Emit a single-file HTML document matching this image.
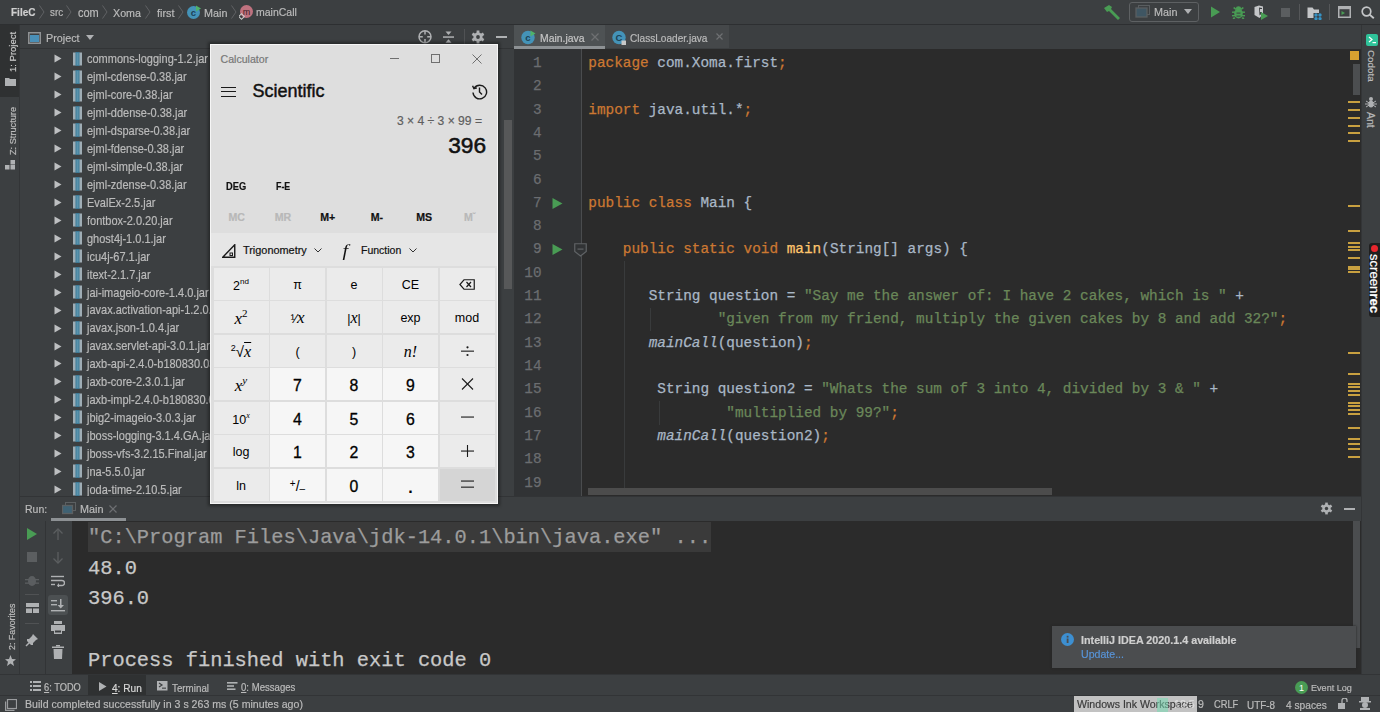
<!DOCTYPE html>
<html><head><meta charset="utf-8">
<style>
*{margin:0;padding:0;box-sizing:border-box}
html,body{width:1380px;height:712px;overflow:hidden;background:#3c3f41;font-family:"Liberation Sans",sans-serif;color:#bbbbbb}
.a{position:absolute}
.ui{white-space:nowrap;-webkit-text-stroke:0.2px currentColor}
.mono{font-family:"Liberation Mono",monospace;white-space:pre;-webkit-text-stroke:0.25px currentColor}
.k{color:#cc7832}.s{color:#6a8759}.f{color:#ffc66d}.i{font-style:italic}
.cb{position:absolute;display:flex;align-items:center;justify-content:center;color:#000;font-size:12.5px;white-space:nowrap;padding-top:2px}
</style></head><body>

<div class="a" style="left:0px;top:0px;width:1380px;height:24px;background:#3c3f41;"></div>
<div class="a" style="left:0px;top:24px;width:1380px;height:1px;background:#2d2f31;"></div>
<div class="a ui" style="left:11px;top:7.30px;font-size:10.90px;line-height:10.90px;color:#cfcfcf;font-weight:bold;transform:scaleX(0.9174);transform-origin:0 50%">FileC</div>
<svg class="a" style="left:38.5px;top:5px;" width="6" height="14" viewBox="0 0 6 14"><polyline points="0.5,0.5 5,7 0.5,13.5" fill="none" stroke="#606264" stroke-width="1"/></svg>
<div class="a ui" style="left:49.5px;top:7.41px;font-size:10.68px;line-height:10.68px;color:#bbbbbb;;transform:scaleX(0.9174);transform-origin:0 50%">src</div>
<svg class="a" style="left:66px;top:5px;" width="6" height="14" viewBox="0 0 6 14"><polyline points="0.5,0.5 5,7 0.5,13.5" fill="none" stroke="#606264" stroke-width="1"/></svg>
<div class="a ui" style="left:77.5px;top:6.75px;font-size:11.99px;line-height:11.99px;color:#bbbbbb;;transform:scaleX(0.9174);transform-origin:0 50%">com</div>
<svg class="a" style="left:102px;top:5px;" width="6" height="14" viewBox="0 0 6 14"><polyline points="0.5,0.5 5,7 0.5,13.5" fill="none" stroke="#606264" stroke-width="1"/></svg>
<div class="a ui" style="left:113px;top:6.92px;font-size:11.66px;line-height:11.66px;color:#bbbbbb;;transform:scaleX(0.9174);transform-origin:0 50%">Xoma</div>
<svg class="a" style="left:145px;top:5px;" width="6" height="14" viewBox="0 0 6 14"><polyline points="0.5,0.5 5,7 0.5,13.5" fill="none" stroke="#606264" stroke-width="1"/></svg>
<div class="a ui" style="left:157px;top:6.86px;font-size:11.77px;line-height:11.77px;color:#bbbbbb;;transform:scaleX(0.9174);transform-origin:0 50%">first</div>
<svg class="a" style="left:177.5px;top:5px;" width="6" height="14" viewBox="0 0 6 14"><polyline points="0.5,0.5 5,7 0.5,13.5" fill="none" stroke="#606264" stroke-width="1"/></svg>
<svg class="a" style="left:186px;top:4px;" width="16" height="16" viewBox="0 0 16 16"><circle cx="7.5" cy="8.5" r="6.5" fill="#4493b8"/><text x="7.3" y="12" font-family="Liberation Sans" font-size="9.5" font-weight="bold" fill="#1b4257" text-anchor="middle">c</text><polygon points="10,1.5 15,4.5 10,7.5" fill="#4fb26a"/></svg>
<div class="a ui" style="left:203.5px;top:6.86px;font-size:11.77px;line-height:11.77px;color:#bbbbbb;;transform:scaleX(0.9174);transform-origin:0 50%">Main</div>
<svg class="a" style="left:231px;top:5px;" width="6" height="14" viewBox="0 0 6 14"><polyline points="0.5,0.5 5,7 0.5,13.5" fill="none" stroke="#606264" stroke-width="1"/></svg>
<svg class="a" style="left:239px;top:4px;" width="16" height="17" viewBox="0 0 16 17"><circle cx="7.5" cy="7.5" r="6.5" fill="#c0727f"/><text x="7.5" y="10.5" font-family="Liberation Sans" font-size="9" fill="#3a1f25" text-anchor="middle">m</text><rect x="0.5" y="10.5" width="4" height="4" transform="rotate(45 2.5 12.5)" fill="none" stroke="#cccccc" stroke-width="1"/></svg>
<div class="a ui" style="left:256.3px;top:7.03px;font-size:11.45px;line-height:11.45px;color:#bbbbbb;;transform:scaleX(0.9174);transform-origin:0 50%">mainCall</div>
<svg class="a" style="left:1103px;top:4px;" width="18" height="16" viewBox="0 0 18 16"><g fill="#499c54"><polygon points="1,4 6,1 9,3 8,5 17,14 15,16 6,7 4,8"/></g></svg>
<div class="a" style="left:1129px;top:2px;width:70px;height:20px;border:1px solid #5e6163;border-radius:3px"></div>
<svg class="a" style="left:1135px;top:5px;" width="16" height="14" viewBox="0 0 16 14"><rect x="3.5" y="0.5" width="11" height="9" fill="none" stroke="#5a5e60"/><rect x="1" y="3" width="11" height="9" fill="#3f5663" stroke="#5a5e60" stroke-width="1.3"/></svg>
<div class="a ui" style="left:1153.5px;top:6.36px;font-size:11.77px;line-height:11.77px;color:#bbbbbb;;transform:scaleX(0.9174);transform-origin:0 50%">Main</div>
<svg class="a" style="left:1184px;top:9px;" width="8" height="6" viewBox="0 0 8 6"><polygon points="0,0 8,0 4,5" fill="#afb1b3"/></svg>
<svg class="a" style="left:1210px;top:6px;" width="12" height="12" viewBox="0 0 12 12"><polygon points="1,0.5 10,6 1,11.5" fill="#499c54"/></svg>
<svg class="a" style="left:1232px;top:5px;" width="13" height="14" viewBox="0 0 13 14"><g fill="#499c54"><ellipse cx="6.5" cy="8.5" rx="4.3" ry="5"/><ellipse cx="6.5" cy="3.2" rx="2.6" ry="2"/><rect x="0" y="6.5" width="13" height="1.4"/><rect x="0" y="10" width="13" height="1.4"/><polygon points="1,3 2.5,2 4.5,4 3.5,5"/><polygon points="12,3 10.5,2 8.5,4 9.5,5"/><polygon points="0.5,13.5 2,12 3.5,13 2,14.5"/><polygon points="12.5,13.5 11,12 9.5,13 11,14.5"/></g><rect x="4.5" y="7.6" width="4" height="1" fill="#3c3f41"/><rect x="4.5" y="10.6" width="4" height="1" fill="#3c3f41"/></svg>
<svg class="a" style="left:1254px;top:5px;" width="15" height="15" viewBox="0 0 15 15"><path d="M0.5,2 L5,0.5 L9,1.5 L9,9 L5.5,13 L0.5,10 Z" fill="#c4c6c8"/><path d="M5,2.5 L8,3 L8,8.5 L5.5,10.5Z" fill="#3c3f41"/><path d="M6,4 L8.5,4 L8.5,7 L6,7Z" fill="#c4c6c8"/><polygon points="7,7 14,11 7,15" fill="#499c54"/></svg>
<div class="a" style="left:1281px;top:7.5px;width:9px;height:9px;background:#5b5e60;"></div>
<div class="a" style="left:1299px;top:4px;width:1px;height:16px;background:#555759;"></div>
<svg class="a" style="left:1307px;top:6.5px;" width="15" height="13" viewBox="0 0 15 13"><path d="M0.5,0.5 L5.5,0.5 L7,2.5 L12,2.5 L12,11 L0.5,11Z" fill="#c4c6c8"/><rect x="6.5" y="6" width="8.5" height="7" fill="#3c3f41"/><circle cx="9" cy="8" r="1.7" fill="#3592c4"/><circle cx="13" cy="8" r="1.7" fill="#3592c4"/><circle cx="9" cy="11.6" r="1.7" fill="#3592c4"/><circle cx="13" cy="11.6" r="1.7" fill="#3592c4"/></svg>
<div class="a" style="left:1329px;top:4px;width:1px;height:16px;background:#555759;"></div>
<svg class="a" style="left:1337.5px;top:6px;" width="14" height="12" viewBox="0 0 14 12"><rect x="0.75" y="0.75" width="11.5" height="10.5" fill="none" stroke="#afb1b3" stroke-width="1.5"/><rect x="1" y="1" width="11" height="2.2" fill="#afb1b3"/><polygon points="3.5,5 7,7 3.5,9" fill="#499c54"/></svg>
<svg class="a" style="left:1361px;top:6px;" width="14" height="13" viewBox="0 0 14 13"><circle cx="5.5" cy="5.5" r="4.3" fill="none" stroke="#c4c6c8" stroke-width="1.7"/><line x1="8.6" y1="8.6" x2="12.8" y2="12.3" stroke="#c4c6c8" stroke-width="1.9"/></svg>
<div class="a" style="left:0px;top:25px;width:19px;height:670px;background:#3c3f41;"></div>
<div class="a" style="left:19px;top:25px;width:1px;height:650px;background:#333537;"></div>
<div class="a" style="left:0px;top:25px;width:19px;height:72px;background:#2f3132;"></div>
<div class="a ui" style="left:4.5px;top:33.5px;width:16px;height:38px;writing-mode:vertical-rl;transform:rotate(180deg);font-size:9.5px;line-height:16px;color:#c8c8c8;text-align:left">1: Project</div>
<svg class="a" style="left:5px;top:77px;" width="11" height="9" viewBox="0 0 11 9"><path d="M0,1 L4,1 L5,2 L11,2 L11,9 L0,9Z" fill="#afb1b3"/></svg>
<div class="a ui" style="left:4.5px;top:107px;width:16px;height:48px;writing-mode:vertical-rl;transform:rotate(180deg);font-size:9.2px;line-height:16px;color:#bbbbbb;text-align:left">Z: Structure</div>
<svg class="a" style="left:5px;top:160px;" width="11" height="10" viewBox="0 0 11 10"><rect x="0" y="5" width="4.5" height="4.5" fill="#afb1b3"/><rect x="5.5" y="5" width="4.5" height="4.5" fill="#afb1b3"/><rect x="5.5" y="0" width="4.5" height="4.5" fill="#afb1b3"/></svg>
<div class="a ui" style="left:4px;top:602.5px;width:16px;height:47px;writing-mode:vertical-rl;transform:rotate(180deg);font-size:8.9px;line-height:16px;color:#bbbbbb;text-align:left">2: Favorites</div>
<svg class="a" style="left:5px;top:655px;" width="11" height="11" viewBox="0 0 11 11"><polygon points="5.5,0 7,4 11,4.2 8,6.8 9,11 5.5,8.6 2,11 3,6.8 0,4.2 4,4" fill="#afb1b3"/></svg>
<div class="a" style="left:20px;top:25px;width:494px;height:471px;background:#3c3f41;"></div>
<div class="a" style="left:20px;top:48px;width:494px;height:1px;background:#323436;"></div>
<svg class="a" style="left:28px;top:32px;" width="13" height="12" viewBox="0 0 13 12"><rect x="0.75" y="0.75" width="11.5" height="10.5" fill="none" stroke="#8f9294" stroke-width="1.5"/><rect x="2" y="3" width="9" height="7" fill="#4a90b8"/></svg>
<div class="a ui" style="left:45.5px;top:32.36px;font-size:11.77px;line-height:11.77px;color:#bbbbbb;;transform:scaleX(0.9174);transform-origin:0 50%">Project</div>
<svg class="a" style="left:86px;top:35px;" width="9" height="6" viewBox="0 0 9 6"><polygon points="0,0 8,0 4,5" fill="#afb1b3"/></svg>
<svg class="a" style="left:417px;top:29px;" width="16" height="16" viewBox="0 0 16 16"><circle cx="8" cy="7.8" r="6" fill="none" stroke="#afb1b3" stroke-width="1.5"/><g stroke="#afb1b3" stroke-width="1.5"><line x1="8" y1="2" x2="8" y2="5.6"/><line x1="8" y1="10" x2="8" y2="13.6"/><line x1="2" y1="7.8" x2="5.8" y2="7.8"/><line x1="10.2" y1="7.8" x2="14" y2="7.8"/></g></svg>
<svg class="a" style="left:442px;top:29px;" width="13" height="16" viewBox="0 0 13 16"><polygon points="3.5,2.4 9.5,2.4 6.5,6" fill="#afb1b3"/><rect x="1" y="7.3" width="11" height="1.5" fill="#afb1b3"/><polygon points="3.5,13.7 9.5,13.7 6.5,10.2" fill="#afb1b3"/></svg>
<div class="a" style="left:464px;top:29px;width:1px;height:16px;background:#505254;"></div>
<svg class="a" style="left:470px;top:29px;" width="16" height="16" viewBox="0 0 16 16"><g fill="#afb1b3"><circle cx="8" cy="8" r="4.6"/><rect x="6.6" y="1.5" width="2.8" height="13"/><rect x="6.6" y="1.5" width="2.8" height="13" transform="rotate(60 8 8)"/><rect x="6.6" y="1.5" width="2.8" height="13" transform="rotate(-60 8 8)"/></g><circle cx="8" cy="8" r="1.9" fill="#3c3f41"/></svg>
<div class="a" style="left:496px;top:36px;width:11px;height:2px;background:#afb1b3;"></div>
<svg class="a" style="left:54px;top:54px;" width="8" height="9" viewBox="0 0 8 9"><polygon points="0.5,0.5 7.5,4.5 0.5,8.5" fill="#bdbfc1"/></svg>
<svg class="a" style="left:73px;top:52px;" width="9" height="14" viewBox="0 0 9 14"><rect x="0" y="0.5" width="9" height="13" fill="#9fadb5"/><rect x="2.5" y="0" width="4" height="14" fill="#3f7a96"/><rect x="3.5" y="1" width="2" height="12" fill="#5a93ad"/></svg>
<div class="a ui" style="left:87px;top:53.30px;font-size:11.99px;line-height:11.99px;color:#bbbbbb;;transform:scaleX(0.9174);transform-origin:0 50%">commons-logging-1.2.jar</div>
<svg class="a" style="left:54px;top:72px;" width="8" height="9" viewBox="0 0 8 9"><polygon points="0.5,0.5 7.5,4.5 0.5,8.5" fill="#bdbfc1"/></svg>
<svg class="a" style="left:73px;top:70px;" width="9" height="14" viewBox="0 0 9 14"><rect x="0" y="0.5" width="9" height="13" fill="#9fadb5"/><rect x="2.5" y="0" width="4" height="14" fill="#3f7a96"/><rect x="3.5" y="1" width="2" height="12" fill="#5a93ad"/></svg>
<div class="a ui" style="left:87px;top:71.24px;font-size:11.99px;line-height:11.99px;color:#bbbbbb;;transform:scaleX(0.9174);transform-origin:0 50%">ejml-cdense-0.38.jar</div>
<svg class="a" style="left:54px;top:90px;" width="8" height="9" viewBox="0 0 8 9"><polygon points="0.5,0.5 7.5,4.5 0.5,8.5" fill="#bdbfc1"/></svg>
<svg class="a" style="left:73px;top:88px;" width="9" height="14" viewBox="0 0 9 14"><rect x="0" y="0.5" width="9" height="13" fill="#9fadb5"/><rect x="2.5" y="0" width="4" height="14" fill="#3f7a96"/><rect x="3.5" y="1" width="2" height="12" fill="#5a93ad"/></svg>
<div class="a ui" style="left:87px;top:89.18px;font-size:11.99px;line-height:11.99px;color:#bbbbbb;;transform:scaleX(0.9174);transform-origin:0 50%">ejml-core-0.38.jar</div>
<svg class="a" style="left:54px;top:108px;" width="8" height="9" viewBox="0 0 8 9"><polygon points="0.5,0.5 7.5,4.5 0.5,8.5" fill="#bdbfc1"/></svg>
<svg class="a" style="left:73px;top:106px;" width="9" height="14" viewBox="0 0 9 14"><rect x="0" y="0.5" width="9" height="13" fill="#9fadb5"/><rect x="2.5" y="0" width="4" height="14" fill="#3f7a96"/><rect x="3.5" y="1" width="2" height="12" fill="#5a93ad"/></svg>
<div class="a ui" style="left:87px;top:107.12px;font-size:11.99px;line-height:11.99px;color:#bbbbbb;;transform:scaleX(0.9174);transform-origin:0 50%">ejml-ddense-0.38.jar</div>
<svg class="a" style="left:54px;top:126px;" width="8" height="9" viewBox="0 0 8 9"><polygon points="0.5,0.5 7.5,4.5 0.5,8.5" fill="#bdbfc1"/></svg>
<svg class="a" style="left:73px;top:123px;" width="9" height="14" viewBox="0 0 9 14"><rect x="0" y="0.5" width="9" height="13" fill="#9fadb5"/><rect x="2.5" y="0" width="4" height="14" fill="#3f7a96"/><rect x="3.5" y="1" width="2" height="12" fill="#5a93ad"/></svg>
<div class="a ui" style="left:87px;top:125.06px;font-size:11.99px;line-height:11.99px;color:#bbbbbb;;transform:scaleX(0.9174);transform-origin:0 50%">ejml-dsparse-0.38.jar</div>
<svg class="a" style="left:54px;top:144px;" width="8" height="9" viewBox="0 0 8 9"><polygon points="0.5,0.5 7.5,4.5 0.5,8.5" fill="#bdbfc1"/></svg>
<svg class="a" style="left:73px;top:141px;" width="9" height="14" viewBox="0 0 9 14"><rect x="0" y="0.5" width="9" height="13" fill="#9fadb5"/><rect x="2.5" y="0" width="4" height="14" fill="#3f7a96"/><rect x="3.5" y="1" width="2" height="12" fill="#5a93ad"/></svg>
<div class="a ui" style="left:87px;top:143.00px;font-size:11.99px;line-height:11.99px;color:#bbbbbb;;transform:scaleX(0.9174);transform-origin:0 50%">ejml-fdense-0.38.jar</div>
<svg class="a" style="left:54px;top:162px;" width="8" height="9" viewBox="0 0 8 9"><polygon points="0.5,0.5 7.5,4.5 0.5,8.5" fill="#bdbfc1"/></svg>
<svg class="a" style="left:73px;top:159px;" width="9" height="14" viewBox="0 0 9 14"><rect x="0" y="0.5" width="9" height="13" fill="#9fadb5"/><rect x="2.5" y="0" width="4" height="14" fill="#3f7a96"/><rect x="3.5" y="1" width="2" height="12" fill="#5a93ad"/></svg>
<div class="a ui" style="left:87px;top:160.95px;font-size:11.99px;line-height:11.99px;color:#bbbbbb;;transform:scaleX(0.9174);transform-origin:0 50%">ejml-simple-0.38.jar</div>
<svg class="a" style="left:54px;top:180px;" width="8" height="9" viewBox="0 0 8 9"><polygon points="0.5,0.5 7.5,4.5 0.5,8.5" fill="#bdbfc1"/></svg>
<svg class="a" style="left:73px;top:177px;" width="9" height="14" viewBox="0 0 9 14"><rect x="0" y="0.5" width="9" height="13" fill="#9fadb5"/><rect x="2.5" y="0" width="4" height="14" fill="#3f7a96"/><rect x="3.5" y="1" width="2" height="12" fill="#5a93ad"/></svg>
<div class="a ui" style="left:87px;top:178.89px;font-size:11.99px;line-height:11.99px;color:#bbbbbb;;transform:scaleX(0.9174);transform-origin:0 50%">ejml-zdense-0.38.jar</div>
<svg class="a" style="left:54px;top:198px;" width="8" height="9" viewBox="0 0 8 9"><polygon points="0.5,0.5 7.5,4.5 0.5,8.5" fill="#bdbfc1"/></svg>
<svg class="a" style="left:73px;top:195px;" width="9" height="14" viewBox="0 0 9 14"><rect x="0" y="0.5" width="9" height="13" fill="#9fadb5"/><rect x="2.5" y="0" width="4" height="14" fill="#3f7a96"/><rect x="3.5" y="1" width="2" height="12" fill="#5a93ad"/></svg>
<div class="a ui" style="left:87px;top:196.83px;font-size:11.99px;line-height:11.99px;color:#bbbbbb;;transform:scaleX(0.9174);transform-origin:0 50%">EvalEx-2.5.jar</div>
<svg class="a" style="left:54px;top:216px;" width="8" height="9" viewBox="0 0 8 9"><polygon points="0.5,0.5 7.5,4.5 0.5,8.5" fill="#bdbfc1"/></svg>
<svg class="a" style="left:73px;top:213px;" width="9" height="14" viewBox="0 0 9 14"><rect x="0" y="0.5" width="9" height="13" fill="#9fadb5"/><rect x="2.5" y="0" width="4" height="14" fill="#3f7a96"/><rect x="3.5" y="1" width="2" height="12" fill="#5a93ad"/></svg>
<div class="a ui" style="left:87px;top:214.77px;font-size:11.99px;line-height:11.99px;color:#bbbbbb;;transform:scaleX(0.9174);transform-origin:0 50%">fontbox-2.0.20.jar</div>
<svg class="a" style="left:54px;top:234px;" width="8" height="9" viewBox="0 0 8 9"><polygon points="0.5,0.5 7.5,4.5 0.5,8.5" fill="#bdbfc1"/></svg>
<svg class="a" style="left:73px;top:231px;" width="9" height="14" viewBox="0 0 9 14"><rect x="0" y="0.5" width="9" height="13" fill="#9fadb5"/><rect x="2.5" y="0" width="4" height="14" fill="#3f7a96"/><rect x="3.5" y="1" width="2" height="12" fill="#5a93ad"/></svg>
<div class="a ui" style="left:87px;top:232.71px;font-size:11.99px;line-height:11.99px;color:#bbbbbb;;transform:scaleX(0.9174);transform-origin:0 50%">ghost4j-1.0.1.jar</div>
<svg class="a" style="left:54px;top:252px;" width="8" height="9" viewBox="0 0 8 9"><polygon points="0.5,0.5 7.5,4.5 0.5,8.5" fill="#bdbfc1"/></svg>
<svg class="a" style="left:73px;top:249px;" width="9" height="14" viewBox="0 0 9 14"><rect x="0" y="0.5" width="9" height="13" fill="#9fadb5"/><rect x="2.5" y="0" width="4" height="14" fill="#3f7a96"/><rect x="3.5" y="1" width="2" height="12" fill="#5a93ad"/></svg>
<div class="a ui" style="left:87px;top:250.65px;font-size:11.99px;line-height:11.99px;color:#bbbbbb;;transform:scaleX(0.9174);transform-origin:0 50%">icu4j-67.1.jar</div>
<svg class="a" style="left:54px;top:270px;" width="8" height="9" viewBox="0 0 8 9"><polygon points="0.5,0.5 7.5,4.5 0.5,8.5" fill="#bdbfc1"/></svg>
<svg class="a" style="left:73px;top:267px;" width="9" height="14" viewBox="0 0 9 14"><rect x="0" y="0.5" width="9" height="13" fill="#9fadb5"/><rect x="2.5" y="0" width="4" height="14" fill="#3f7a96"/><rect x="3.5" y="1" width="2" height="12" fill="#5a93ad"/></svg>
<div class="a ui" style="left:87px;top:268.59px;font-size:11.99px;line-height:11.99px;color:#bbbbbb;;transform:scaleX(0.9174);transform-origin:0 50%">itext-2.1.7.jar</div>
<svg class="a" style="left:54px;top:288px;" width="8" height="9" viewBox="0 0 8 9"><polygon points="0.5,0.5 7.5,4.5 0.5,8.5" fill="#bdbfc1"/></svg>
<svg class="a" style="left:73px;top:285px;" width="9" height="14" viewBox="0 0 9 14"><rect x="0" y="0.5" width="9" height="13" fill="#9fadb5"/><rect x="2.5" y="0" width="4" height="14" fill="#3f7a96"/><rect x="3.5" y="1" width="2" height="12" fill="#5a93ad"/></svg>
<div class="a ui" style="left:87px;top:286.53px;font-size:11.99px;line-height:11.99px;color:#bbbbbb;;transform:scaleX(0.9174);transform-origin:0 50%">jai-imageio-core-1.4.0.jar</div>
<svg class="a" style="left:54px;top:306px;" width="8" height="9" viewBox="0 0 8 9"><polygon points="0.5,0.5 7.5,4.5 0.5,8.5" fill="#bdbfc1"/></svg>
<svg class="a" style="left:73px;top:303px;" width="9" height="14" viewBox="0 0 9 14"><rect x="0" y="0.5" width="9" height="13" fill="#9fadb5"/><rect x="2.5" y="0" width="4" height="14" fill="#3f7a96"/><rect x="3.5" y="1" width="2" height="12" fill="#5a93ad"/></svg>
<div class="a ui" style="left:87px;top:304.47px;font-size:11.99px;line-height:11.99px;color:#bbbbbb;;transform:scaleX(0.9174);transform-origin:0 50%">javax.activation-api-1.2.0.jar</div>
<svg class="a" style="left:54px;top:324px;" width="8" height="9" viewBox="0 0 8 9"><polygon points="0.5,0.5 7.5,4.5 0.5,8.5" fill="#bdbfc1"/></svg>
<svg class="a" style="left:73px;top:321px;" width="9" height="14" viewBox="0 0 9 14"><rect x="0" y="0.5" width="9" height="13" fill="#9fadb5"/><rect x="2.5" y="0" width="4" height="14" fill="#3f7a96"/><rect x="3.5" y="1" width="2" height="12" fill="#5a93ad"/></svg>
<div class="a ui" style="left:87px;top:322.41px;font-size:11.99px;line-height:11.99px;color:#bbbbbb;;transform:scaleX(0.9174);transform-origin:0 50%">javax.json-1.0.4.jar</div>
<svg class="a" style="left:54px;top:342px;" width="8" height="9" viewBox="0 0 8 9"><polygon points="0.5,0.5 7.5,4.5 0.5,8.5" fill="#bdbfc1"/></svg>
<svg class="a" style="left:73px;top:339px;" width="9" height="14" viewBox="0 0 9 14"><rect x="0" y="0.5" width="9" height="13" fill="#9fadb5"/><rect x="2.5" y="0" width="4" height="14" fill="#3f7a96"/><rect x="3.5" y="1" width="2" height="12" fill="#5a93ad"/></svg>
<div class="a ui" style="left:87px;top:340.35px;font-size:11.99px;line-height:11.99px;color:#bbbbbb;;transform:scaleX(0.9174);transform-origin:0 50%">javax.servlet-api-3.0.1.jar</div>
<svg class="a" style="left:54px;top:359px;" width="8" height="9" viewBox="0 0 8 9"><polygon points="0.5,0.5 7.5,4.5 0.5,8.5" fill="#bdbfc1"/></svg>
<svg class="a" style="left:73px;top:357px;" width="9" height="14" viewBox="0 0 9 14"><rect x="0" y="0.5" width="9" height="13" fill="#9fadb5"/><rect x="2.5" y="0" width="4" height="14" fill="#3f7a96"/><rect x="3.5" y="1" width="2" height="12" fill="#5a93ad"/></svg>
<div class="a ui" style="left:87px;top:358.29px;font-size:11.99px;line-height:11.99px;color:#bbbbbb;;transform:scaleX(0.9174);transform-origin:0 50%">jaxb-api-2.4.0-b180830.0359.jar</div>
<svg class="a" style="left:54px;top:377px;" width="8" height="9" viewBox="0 0 8 9"><polygon points="0.5,0.5 7.5,4.5 0.5,8.5" fill="#bdbfc1"/></svg>
<svg class="a" style="left:73px;top:375px;" width="9" height="14" viewBox="0 0 9 14"><rect x="0" y="0.5" width="9" height="13" fill="#9fadb5"/><rect x="2.5" y="0" width="4" height="14" fill="#3f7a96"/><rect x="3.5" y="1" width="2" height="12" fill="#5a93ad"/></svg>
<div class="a ui" style="left:87px;top:376.23px;font-size:11.99px;line-height:11.99px;color:#bbbbbb;;transform:scaleX(0.9174);transform-origin:0 50%">jaxb-core-2.3.0.1.jar</div>
<svg class="a" style="left:54px;top:395px;" width="8" height="9" viewBox="0 0 8 9"><polygon points="0.5,0.5 7.5,4.5 0.5,8.5" fill="#bdbfc1"/></svg>
<svg class="a" style="left:73px;top:393px;" width="9" height="14" viewBox="0 0 9 14"><rect x="0" y="0.5" width="9" height="13" fill="#9fadb5"/><rect x="2.5" y="0" width="4" height="14" fill="#3f7a96"/><rect x="3.5" y="1" width="2" height="12" fill="#5a93ad"/></svg>
<div class="a ui" style="left:87px;top:394.17px;font-size:11.99px;line-height:11.99px;color:#bbbbbb;;transform:scaleX(0.9174);transform-origin:0 50%">jaxb-impl-2.4.0-b180830.0438.jar</div>
<svg class="a" style="left:54px;top:413px;" width="8" height="9" viewBox="0 0 8 9"><polygon points="0.5,0.5 7.5,4.5 0.5,8.5" fill="#bdbfc1"/></svg>
<svg class="a" style="left:73px;top:410px;" width="9" height="14" viewBox="0 0 9 14"><rect x="0" y="0.5" width="9" height="13" fill="#9fadb5"/><rect x="2.5" y="0" width="4" height="14" fill="#3f7a96"/><rect x="3.5" y="1" width="2" height="12" fill="#5a93ad"/></svg>
<div class="a ui" style="left:87px;top:412.11px;font-size:11.99px;line-height:11.99px;color:#bbbbbb;;transform:scaleX(0.9174);transform-origin:0 50%">jbig2-imageio-3.0.3.jar</div>
<svg class="a" style="left:54px;top:431px;" width="8" height="9" viewBox="0 0 8 9"><polygon points="0.5,0.5 7.5,4.5 0.5,8.5" fill="#bdbfc1"/></svg>
<svg class="a" style="left:73px;top:428px;" width="9" height="14" viewBox="0 0 9 14"><rect x="0" y="0.5" width="9" height="13" fill="#9fadb5"/><rect x="2.5" y="0" width="4" height="14" fill="#3f7a96"/><rect x="3.5" y="1" width="2" height="12" fill="#5a93ad"/></svg>
<div class="a ui" style="left:87px;top:430.05px;font-size:11.99px;line-height:11.99px;color:#bbbbbb;;transform:scaleX(0.9174);transform-origin:0 50%">jboss-logging-3.1.4.GA.jar</div>
<svg class="a" style="left:54px;top:449px;" width="8" height="9" viewBox="0 0 8 9"><polygon points="0.5,0.5 7.5,4.5 0.5,8.5" fill="#bdbfc1"/></svg>
<svg class="a" style="left:73px;top:446px;" width="9" height="14" viewBox="0 0 9 14"><rect x="0" y="0.5" width="9" height="13" fill="#9fadb5"/><rect x="2.5" y="0" width="4" height="14" fill="#3f7a96"/><rect x="3.5" y="1" width="2" height="12" fill="#5a93ad"/></svg>
<div class="a ui" style="left:87px;top:447.99px;font-size:11.99px;line-height:11.99px;color:#bbbbbb;;transform:scaleX(0.9174);transform-origin:0 50%">jboss-vfs-3.2.15.Final.jar</div>
<svg class="a" style="left:54px;top:467px;" width="8" height="9" viewBox="0 0 8 9"><polygon points="0.5,0.5 7.5,4.5 0.5,8.5" fill="#bdbfc1"/></svg>
<svg class="a" style="left:73px;top:464px;" width="9" height="14" viewBox="0 0 9 14"><rect x="0" y="0.5" width="9" height="13" fill="#9fadb5"/><rect x="2.5" y="0" width="4" height="14" fill="#3f7a96"/><rect x="3.5" y="1" width="2" height="12" fill="#5a93ad"/></svg>
<div class="a ui" style="left:87px;top:465.93px;font-size:11.99px;line-height:11.99px;color:#bbbbbb;;transform:scaleX(0.9174);transform-origin:0 50%">jna-5.5.0.jar</div>
<svg class="a" style="left:54px;top:485px;" width="8" height="9" viewBox="0 0 8 9"><polygon points="0.5,0.5 7.5,4.5 0.5,8.5" fill="#bdbfc1"/></svg>
<svg class="a" style="left:73px;top:482px;" width="9" height="14" viewBox="0 0 9 14"><rect x="0" y="0.5" width="9" height="13" fill="#9fadb5"/><rect x="2.5" y="0" width="4" height="14" fill="#3f7a96"/><rect x="3.5" y="1" width="2" height="12" fill="#5a93ad"/></svg>
<div class="a ui" style="left:87px;top:483.87px;font-size:11.99px;line-height:11.99px;color:#bbbbbb;;transform:scaleX(0.9174);transform-origin:0 50%">joda-time-2.10.5.jar</div>
<div class="a" style="left:504px;top:120px;width:8px;height:169px;background:#575859;"></div>
<div class="a" style="left:514px;top:25px;width:848px;height:23px;background:#3c3f41;"></div>
<div class="a" style="left:514px;top:25px;width:91px;height:24px;background:#4e5254;"></div>
<div class="a" style="left:514px;top:46px;width:91px;height:3px;background:#8d9194;"></div>
<div class="a" style="left:605px;top:25px;width:124px;height:23px;background:#45484a;"></div>
<svg class="a" style="left:520px;top:29px;" width="17" height="16" viewBox="0 0 17 16"><circle cx="8" cy="8.5" r="6.7" fill="#4493b8"/><text x="7.8" y="12" font-family="Liberation Sans" font-size="9.5" font-weight="bold" fill="#1b4257" text-anchor="middle">c</text><polygon points="10.5,1.5 15.5,4.5 10.5,7.5" fill="#4fb26a"/></svg>
<div class="a ui" style="left:539.5px;top:32.58px;font-size:11.34px;line-height:11.34px;color:#c6c6c6;;transform:scaleX(0.9174);transform-origin:0 50%">Main.java</div>
<svg class="a" style="left:591px;top:33px;" width="8" height="8" viewBox="0 0 8 8"><g stroke="#6e7072" stroke-width="1.2"><line x1="0.5" y1="0.5" x2="7.5" y2="7.5"/><line x1="7.5" y1="0.5" x2="0.5" y2="7.5"/></g></svg>
<svg class="a" style="left:611px;top:29px;" width="17" height="17" viewBox="0 0 17 17"><circle cx="8" cy="8.5" r="6.7" fill="#4493b8"/><text x="8" y="12" font-family="Liberation Sans" font-size="9.5" font-weight="bold" fill="#1b4257" text-anchor="middle">C</text><rect x="10.5" y="11.5" width="4.5" height="4.5" fill="#c8c8c8"/></svg>
<div class="a ui" style="left:629.5px;top:32.75px;font-size:11.01px;line-height:11.01px;color:#bbbbbb;;transform:scaleX(0.9174);transform-origin:0 50%">ClassLoader.java</div>
<svg class="a" style="left:716px;top:33px;" width="7" height="7" viewBox="0 0 7 7"><g stroke="#6e7072" stroke-width="1.2"><line x1="0.5" y1="0.5" x2="6.5" y2="6.5"/><line x1="6.5" y1="0.5" x2="0.5" y2="6.5"/></g></svg>
<div class="a" style="left:514px;top:49px;width:848px;height:447px;background:#2b2b2b;"></div>
<div class="a" style="left:514px;top:49px;width:67px;height:447px;background:#313335;"></div>
<div class="a" style="left:581px;top:49px;width:1px;height:447px;background:#4a4c4e;"></div>
<div class="a mono" style="left:514px;top:55.91px;width:27.6px;text-align:right;font-size:14.38px;line-height:14.38px;color:#6b6d70">1</div>
<div class="a mono" style="left:514px;top:79.23px;width:27.6px;text-align:right;font-size:14.38px;line-height:14.38px;color:#6b6d70">2</div>
<div class="a mono" style="left:514px;top:102.55px;width:27.6px;text-align:right;font-size:14.38px;line-height:14.38px;color:#6b6d70">3</div>
<div class="a mono" style="left:514px;top:125.87px;width:27.6px;text-align:right;font-size:14.38px;line-height:14.38px;color:#6b6d70">4</div>
<div class="a mono" style="left:514px;top:149.19px;width:27.6px;text-align:right;font-size:14.38px;line-height:14.38px;color:#6b6d70">5</div>
<div class="a mono" style="left:514px;top:172.51px;width:27.6px;text-align:right;font-size:14.38px;line-height:14.38px;color:#6b6d70">6</div>
<div class="a mono" style="left:514px;top:195.83px;width:27.6px;text-align:right;font-size:14.38px;line-height:14.38px;color:#6b6d70">7</div>
<div class="a mono" style="left:514px;top:219.15px;width:27.6px;text-align:right;font-size:14.38px;line-height:14.38px;color:#6b6d70">8</div>
<div class="a mono" style="left:514px;top:242.47px;width:27.6px;text-align:right;font-size:14.38px;line-height:14.38px;color:#6b6d70">9</div>
<div class="a mono" style="left:514px;top:265.79px;width:27.6px;text-align:right;font-size:14.38px;line-height:14.38px;color:#6b6d70">10</div>
<div class="a mono" style="left:514px;top:289.11px;width:27.6px;text-align:right;font-size:14.38px;line-height:14.38px;color:#6b6d70">11</div>
<div class="a mono" style="left:514px;top:312.43px;width:27.6px;text-align:right;font-size:14.38px;line-height:14.38px;color:#6b6d70">12</div>
<div class="a mono" style="left:514px;top:335.75px;width:27.6px;text-align:right;font-size:14.38px;line-height:14.38px;color:#6b6d70">13</div>
<div class="a mono" style="left:514px;top:359.07px;width:27.6px;text-align:right;font-size:14.38px;line-height:14.38px;color:#6b6d70">14</div>
<div class="a mono" style="left:514px;top:382.39px;width:27.6px;text-align:right;font-size:14.38px;line-height:14.38px;color:#6b6d70">15</div>
<div class="a mono" style="left:514px;top:405.71px;width:27.6px;text-align:right;font-size:14.38px;line-height:14.38px;color:#6b6d70">16</div>
<div class="a mono" style="left:514px;top:429.03px;width:27.6px;text-align:right;font-size:14.38px;line-height:14.38px;color:#6b6d70">17</div>
<div class="a mono" style="left:514px;top:452.35px;width:27.6px;text-align:right;font-size:14.38px;line-height:14.38px;color:#6b6d70">18</div>
<div class="a mono" style="left:514px;top:475.67px;width:27.6px;text-align:right;font-size:14.38px;line-height:14.38px;color:#6b6d70">19</div>
<div class="a" style="left:624px;top:261.32px;width:1px;height:227.68px;background:#393b3c;"></div>
<div class="a" style="left:650px;top:307.96000000000004px;width:1px;height:23.32px;background:#393b3c;"></div>
<div class="a" style="left:659px;top:401.24px;width:1px;height:23.32px;background:#393b3c;"></div>
<div class="a mono" style="left:588.3px;top:55.91px;font-size:14.38px;line-height:14.38px;color:#a9b7c6"><span class="k">package</span> com.Xoma.first<span class="k">;</span></div>
<div class="a mono" style="left:588.3px;top:102.55px;font-size:14.38px;line-height:14.38px;color:#a9b7c6"><span class="k">import</span> java.util.*<span class="k">;</span></div>
<div class="a mono" style="left:588.3px;top:195.83px;font-size:14.38px;line-height:14.38px;color:#a9b7c6"><span class="k">public class</span> Main {</div>
<div class="a mono" style="left:588.3px;top:242.47px;font-size:14.38px;line-height:14.38px;color:#a9b7c6">    <span class="k">public static void</span> <span class="f">main</span>(String[] args) {</div>
<div class="a mono" style="left:588.3px;top:289.11px;font-size:14.38px;line-height:14.38px;color:#a9b7c6">       String question = <span class="s">"Say me the answer of: I have 2 cakes, which is "</span> +</div>
<div class="a mono" style="left:588.3px;top:312.43px;font-size:14.38px;line-height:14.38px;color:#a9b7c6">               <span class="s">"given from my friend, multiply the given cakes by 8 and add 32?"</span><span class="k">;</span></div>
<div class="a mono" style="left:588.3px;top:335.75px;font-size:14.38px;line-height:14.38px;color:#a9b7c6">       <span class="i">mainCall</span>(question)<span class="k">;</span></div>
<div class="a mono" style="left:588.3px;top:382.39px;font-size:14.38px;line-height:14.38px;color:#a9b7c6">        String question2 = <span class="s">"Whats the sum of 3 into 4, divided by 3 &amp; "</span> +</div>
<div class="a mono" style="left:588.3px;top:405.71px;font-size:14.38px;line-height:14.38px;color:#a9b7c6">                <span class="s">"multiplied by 99?"</span><span class="k">;</span></div>
<div class="a mono" style="left:588.3px;top:429.03px;font-size:14.38px;line-height:14.38px;color:#a9b7c6">        <span class="i">mainCall</span>(question2)<span class="k">;</span></div>
<svg class="a" style="left:552px;top:198px;" width="11" height="11" viewBox="0 0 11 11"><polygon points="0.5,0 10.5,5.5 0.5,11" fill="#499c54"/></svg>
<svg class="a" style="left:552px;top:244px;" width="11" height="11" viewBox="0 0 11 11"><polygon points="0.5,0 10.5,5.5 0.5,11" fill="#499c54"/></svg>
<svg class="a" style="left:574px;top:243px;" width="13" height="14" viewBox="0 0 13 14"><path d="M0.75,0.75 H12.25 V8.5 L6.5,13 L0.75,8.5Z" fill="#313335" stroke="#606366" stroke-width="1.2"/><rect x="3.5" y="5.5" width="6" height="1.2" fill="#606366"/></svg>
<div class="a" style="left:588px;top:488px;width:464px;height:7px;background:#4c4c4c;"></div>
<div class="a" style="left:1350px;top:51px;width:9px;height:9px;background:#d8a130;"></div>
<div class="a" style="left:1353px;top:64px;width:7px;height:31px;background:#4c4e50;"></div>
<div class="a" style="left:1348px;top:101px;width:12px;height:2px;background:#c8a040;"></div>
<div class="a" style="left:1348px;top:109px;width:12px;height:2px;background:#c8a040;"></div>
<div class="a" style="left:1348px;top:117px;width:12px;height:2px;background:#c8a040;"></div>
<div class="a" style="left:1348px;top:124.5px;width:12px;height:2px;background:#c8a040;"></div>
<div class="a" style="left:1348px;top:132px;width:12px;height:2px;background:#c8a040;"></div>
<div class="a" style="left:1348px;top:139.5px;width:12px;height:2px;background:#c8a040;"></div>
<div class="a" style="left:1348px;top:205px;width:12px;height:2px;background:#c8a040;"></div>
<div class="a" style="left:1348px;top:229.5px;width:12px;height:2px;background:#c8a040;"></div>
<div class="a" style="left:1348px;top:241.5px;width:12px;height:2px;background:#c8a040;"></div>
<div class="a" style="left:1348px;top:245.5px;width:12px;height:2px;background:#c8a040;"></div>
<div class="a" style="left:1348px;top:249px;width:12px;height:2px;background:#c8a040;"></div>
<div class="a" style="left:1348px;top:256.5px;width:12px;height:2px;background:#c8a040;"></div>
<div class="a" style="left:1348px;top:265.5px;width:12px;height:2px;background:#c8a040;"></div>
<div class="a" style="left:1348px;top:268px;width:12px;height:2px;background:#c8a040;"></div>
<div class="a" style="left:1348px;top:270.5px;width:12px;height:2px;background:#c8a040;"></div>
<div class="a" style="left:1348px;top:351.5px;width:12px;height:2px;background:#c8a040;"></div>
<div class="a" style="left:1348px;top:373px;width:12px;height:2px;background:#c8a040;"></div>
<div class="a" style="left:1348px;top:382.5px;width:12px;height:2px;background:#c8a040;"></div>
<div class="a" style="left:1348px;top:386px;width:12px;height:2px;background:#c8a040;"></div>
<div class="a" style="left:1348px;top:389.5px;width:12px;height:2px;background:#c8a040;"></div>
<div class="a" style="left:1348px;top:393.5px;width:12px;height:2px;background:#c8a040;"></div>
<div class="a" style="left:1348px;top:401.5px;width:12px;height:2px;background:#c8a040;"></div>
<div class="a" style="left:1348px;top:405px;width:12px;height:2px;background:#c8a040;"></div>
<div class="a" style="left:1348px;top:408.5px;width:12px;height:2px;background:#c8a040;"></div>
<div class="a" style="left:1348px;top:412.5px;width:12px;height:2px;background:#c8a040;"></div>
<div class="a" style="left:1348px;top:427px;width:12px;height:2px;background:#c8a040;"></div>
<div class="a" style="left:1348px;top:438px;width:12px;height:2px;background:#c8a040;"></div>
<div class="a" style="left:1348px;top:443px;width:12px;height:2px;background:#c8a040;"></div>
<div class="a" style="left:1348px;top:448px;width:12px;height:2px;background:#c8a040;"></div>
<div class="a" style="left:1348px;top:455.5px;width:12px;height:2px;background:#c8a040;"></div>
<div class="a" style="left:1361px;top:25px;width:1px;height:650px;background:#333537;"></div>
<div class="a" style="left:1362px;top:25px;width:18px;height:670px;background:#3c3f41;"></div>
<svg class="a" style="left:1366px;top:34px;" width="12" height="12" viewBox="0 0 12 12"><rect x="0" y="0" width="12" height="12" rx="2" fill="#2fc39a"/><polyline points="3,3 6,5.5 3,8" fill="none" stroke="#fff" stroke-width="1.2"/><rect x="6.5" y="8" width="3.5" height="1.2" fill="#fff"/></svg>
<div class="a ui" style="left:1363px;top:49.5px;width:16px;height:33px;writing-mode:vertical-rl;font-size:9.8px;line-height:16px;color:#bbbbbb">Codota</div>
<svg class="a" style="left:1365px;top:96px;" width="12" height="12" viewBox="0 0 12 12"><g fill="#afb1b3"><ellipse cx="6" cy="3" rx="2" ry="2"/><ellipse cx="6" cy="8" rx="2.5" ry="3.5"/></g><g stroke="#afb1b3" stroke-width="1"><line x1="1" y1="5" x2="11" y2="11"/><line x1="11" y1="5" x2="1" y2="11"/><line x1="0" y1="8" x2="12" y2="8"/></g></svg>
<div class="a ui" style="left:1363px;top:112px;width:16px;height:16px;writing-mode:vertical-rl;font-size:10.5px;line-height:16px;color:#bbbbbb">Ant</div>
<div class="a" style="left:1369px;top:243px;width:11px;height:74px;background:#1f1f1f;border-radius:3px 0 0 3px"></div>
<div class="a" style="left:1371px;top:245px;width:7px;height:7px;border-radius:50%;background:#e8262d"></div>
<div class="a ui" style="left:1368px;top:254px;width:13px;height:64px;writing-mode:vertical-rl;font-size:13.1px;line-height:13px;color:#ffffff">screen<span style="font-weight:bold">rec</span></div>
<div class="a" style="left:20px;top:496px;width:1341px;height:1px;background:#323436;"></div>
<div class="a" style="left:20px;top:497px;width:1341px;height:24px;background:#3c3f41;"></div>
<div class="a ui" style="left:25px;top:503.53px;font-size:11.45px;line-height:11.45px;color:#bbbbbb;;transform:scaleX(0.9174);transform-origin:0 50%">Run:</div>
<svg class="a" style="left:62px;top:502px;" width="14" height="13" viewBox="0 0 14 13"><rect x="3.5" y="0.5" width="10" height="8" fill="none" stroke="#5c6062"/><rect x="0.5" y="3.5" width="10" height="8" fill="#3f6274" stroke="#5c6062" stroke-width="1.3"/></svg>
<div class="a ui" style="left:79.5px;top:503.36px;font-size:11.77px;line-height:11.77px;color:#bbbbbb;;transform:scaleX(0.9174);transform-origin:0 50%">Main</div>
<svg class="a" style="left:109px;top:505px;" width="8" height="8" viewBox="0 0 8 8"><g stroke="#6e7072" stroke-width="1.2"><line x1="0.5" y1="0.5" x2="7.5" y2="7.5"/><line x1="7.5" y1="0.5" x2="0.5" y2="7.5"/></g></svg>
<div class="a" style="left:51px;top:518px;width:75px;height:3px;background:#8d9194;"></div>
<svg class="a" style="left:1318.5px;top:501px;" width="15" height="15" viewBox="0 0 15 15"><g fill="#afb1b3"><circle cx="7.5" cy="7.5" r="4.2"/><rect x="6.2" y="1.6" width="2.6" height="11.8"/><rect x="6.2" y="1.6" width="2.6" height="11.8" transform="rotate(60 7.5 7.5)"/><rect x="6.2" y="1.6" width="2.6" height="11.8" transform="rotate(-60 7.5 7.5)"/></g><circle cx="7.5" cy="7.5" r="1.7" fill="#3c3f41"/></svg>
<div class="a" style="left:1344px;top:508px;width:11px;height:2px;background:#afb1b3;"></div>
<div class="a" style="left:20px;top:521px;width:52px;height:153px;background:#3c3f41;"></div>
<div class="a" style="left:45px;top:521px;width:1px;height:153px;background:#323436;"></div>
<div class="a" style="left:72px;top:521px;width:1289px;height:153px;background:#2b2b2b;"></div>
<svg class="a" style="left:26px;top:528px;" width="12" height="12" viewBox="0 0 12 12"><polygon points="1,0 11,6 1,12" fill="#499c54"/></svg>
<div class="a" style="left:27px;top:552px;width:10px;height:10px;background:#5b5e60;"></div>
<svg class="a" style="left:25px;top:573px;" width="14" height="14" viewBox="0 0 14 14"><g fill="#5b5e60"><ellipse cx="7" cy="8" rx="4" ry="5"/><rect x="0" y="6" width="14" height="1.3"/><rect x="0" y="9.5" width="14" height="1.3"/></g></svg>
<div class="a" style="left:25px;top:594px;width:14px;height:1px;background:#505254;"></div>
<svg class="a" style="left:26px;top:603px;" width="13" height="10" viewBox="0 0 13 10"><rect x="0" y="0" width="13" height="4" fill="#afb1b3"/><rect x="0" y="5.5" width="6" height="4.5" fill="#afb1b3"/><rect x="7" y="5.5" width="6" height="4.5" fill="#afb1b3"/></svg>
<div class="a" style="left:25px;top:623px;width:14px;height:1px;background:#505254;"></div>
<svg class="a" style="left:25px;top:633px;" width="14" height="14" viewBox="0 0 14 14"><path d="M8,1 L13,6 L11,7 L8,10 L8,12 L6,12 L2,8 L2,6 L4,6 L7,3Z" fill="#afb1b3"/><line x1="1" y1="13" x2="5" y2="9" stroke="#afb1b3" stroke-width="1.5"/></svg>
<svg class="a" style="left:52px;top:528px;" width="12" height="12" viewBox="0 0 12 12"><g stroke="#5b5e60" stroke-width="1.3" fill="none"><line x1="6" y1="1" x2="6" y2="12"/><polyline points="1.5,5.5 6,1 10.5,5.5"/></g></svg>
<svg class="a" style="left:52px;top:552px;" width="12" height="12" viewBox="0 0 12 12"><g stroke="#5b5e60" stroke-width="1.3" fill="none"><line x1="6" y1="0" x2="6" y2="11"/><polyline points="1.5,6.5 6,11 10.5,6.5"/></g></svg>
<svg class="a" style="left:51px;top:575px;" width="14" height="12" viewBox="0 0 14 12"><g stroke="#afb1b3" stroke-width="1.4" fill="none"><line x1="0" y1="1.5" x2="13" y2="1.5"/><path d="M0,5.5 H11 A2.5,2.5 0 0 1 11,10.5 H7"/><line x1="0" y1="9.5" x2="4" y2="9.5"/></g><polygon points="8,8 6,10.5 8,13" fill="#afb1b3"/></svg>
<div class="a" style="left:48px;top:595px;width:20px;height:20px;background:#4c5052;border-radius:3px"></div>
<svg class="a" style="left:51px;top:599px;" width="14" height="13" viewBox="0 0 14 13"><g fill="#afb1b3"><rect x="0" y="1" width="6" height="1.4"/><rect x="0" y="5" width="6" height="1.4"/><rect x="0" y="11" width="14" height="1.4"/><rect x="9" y="0" width="1.5" height="7"/><polygon points="6.5,6 13,6 9.75,9.5"/></g></svg>
<svg class="a" style="left:51px;top:621px;" width="14" height="13" viewBox="0 0 14 13"><g fill="#afb1b3"><rect x="3" y="0" width="8" height="3"/><rect x="0" y="4" width="14" height="6"/><rect x="3" y="8" width="8" height="5"/></g><rect x="4" y="9.5" width="6" height="2" fill="#3c3f41"/></svg>
<svg class="a" style="left:52px;top:645px;" width="12" height="14" viewBox="0 0 12 14"><g fill="#afb1b3"><rect x="0" y="1.5" width="12" height="1.5"/><rect x="4" y="0" width="4" height="1.5"/><path d="M1.5,4 H10.5 L10,14 H2Z"/></g></svg>
<div class="a" style="left:88px;top:522px;width:623px;height:30px;background:#3a3a3a;"></div>
<div class="a mono" style="left:88px;top:528.02px;font-size:20.36px;line-height:20.36px;color:#9c9c9c">"C:\Program Files\Java\jdk-14.0.1\bin\java.exe" ...</div>
<div class="a mono" style="left:88px;top:558.67px;font-size:20.36px;line-height:20.36px;color:#c8c8c8">48.0</div>
<div class="a mono" style="left:88px;top:589.32px;font-size:20.36px;line-height:20.36px;color:#c8c8c8">396.0</div>
<div class="a mono" style="left:88px;top:650.62px;font-size:20.36px;line-height:20.36px;color:#c8c8c8">Process finished with exit code 0</div>
<div class="a" style="left:1353px;top:521px;width:7px;height:127px;background:#4b4d4f;"></div>
<div class="a" style="left:1052px;top:626px;width:304px;height:42px;background:#4b4d4f;box-shadow:0 0 2px #222"></div>
<svg class="a" style="left:1061px;top:633px;" width="13" height="13" viewBox="0 0 13 13"><circle cx="6.5" cy="6.5" r="6.5" fill="#3d8fd1"/><rect x="5.7" y="5.5" width="1.8" height="4.5" fill="#4b4d4f"/><rect x="5.7" y="2.8" width="1.8" height="1.8" fill="#4b4d4f"/></svg>
<div class="a ui" style="left:1081.3px;top:634.39px;font-size:11.73px;line-height:11.73px;color:#cfcfcf;font-weight:bold;transform:scaleX(0.9174);transform-origin:0 50%">IntelliJ IDEA 2020.1.4 available</div>
<div class="a ui" style="left:1081.3px;top:649.47px;font-size:11.55px;line-height:11.55px;color:#5894d8;;transform:scaleX(0.9174);transform-origin:0 50%">Update...</div>
<div class="a" style="left:0px;top:674px;width:1380px;height:1px;background:#323436;"></div>
<div class="a" style="left:0px;top:675px;width:1380px;height:20px;background:#3c3f41;"></div>
<div class="a" style="left:88px;top:675px;width:58px;height:20px;background:#2f3132;"></div>
<svg class="a" style="left:30px;top:681px;" width="11" height="10" viewBox="0 0 11 10"><g fill="#afb1b3"><rect x="0" y="0" width="2" height="2"/><rect x="3" y="0" width="8" height="2"/><rect x="0" y="4" width="2" height="2"/><rect x="3" y="4" width="8" height="2"/><rect x="0" y="8" width="2" height="2"/><rect x="3" y="8" width="8" height="2"/></g></svg>
<div class="a ui" style="left:44px;top:683.18px;font-size:10.14px;line-height:10.14px;color:#bbbbbb;;transform:scaleX(0.9174);transform-origin:0 50%"><u>6</u>: TODO</div>
<svg class="a" style="left:99px;top:682px;" width="8" height="9" viewBox="0 0 8 9"><polygon points="0,0 7.5,4.5 0,9" fill="#afb1b3"/></svg>
<div class="a ui" style="left:112px;top:682.75px;font-size:11.01px;line-height:11.01px;color:#d8d8d8;;transform:scaleX(0.9174);transform-origin:0 50%"><u>4</u>: Run</div>
<svg class="a" style="left:157px;top:681px;" width="11" height="10" viewBox="0 0 11 10"><rect x="0" y="0" width="10.5" height="9.5" fill="#afb1b3"/><polyline points="2,2 5,4 2,6" fill="none" stroke="#3c3f41" stroke-width="1.2"/><rect x="5" y="6.6" width="4" height="1.1" fill="#3c3f41"/></svg>
<div class="a ui" style="left:172px;top:682.91px;font-size:10.68px;line-height:10.68px;color:#bbbbbb;;transform:scaleX(0.9174);transform-origin:0 50%">Terminal</div>
<svg class="a" style="left:227px;top:682px;" width="11" height="9" viewBox="0 0 11 9"><g fill="#afb1b3"><rect x="0" y="0" width="10.5" height="1.6"/><rect x="0" y="3.2" width="7" height="1.6"/><rect x="0" y="6.4" width="8.5" height="1.6"/></g></svg>
<div class="a ui" style="left:241px;top:683.02px;font-size:10.46px;line-height:10.46px;color:#bbbbbb;;transform:scaleX(0.9174);transform-origin:0 50%"><u>0</u>: Messages</div>
<svg class="a" style="left:1295px;top:681px;" width="13" height="13" viewBox="0 0 13 13"><circle cx="6.5" cy="6.5" r="6.5" fill="#499c54"/><text x="6.5" y="10" font-family="Liberation Sans" font-size="9" fill="#fff" text-anchor="middle">1</text></svg>
<div class="a ui" style="left:1311px;top:682.69px;font-size:9.92px;line-height:9.92px;color:#bbbbbb;;transform:scaleX(0.9174);transform-origin:0 50%">Event Log</div>
<div class="a" style="left:0px;top:695px;width:1380px;height:17px;background:#3c3f41;"></div>
<div class="a" style="left:0px;top:695px;width:1380px;height:1px;background:#323436;"></div>
<svg class="a" style="left:5px;top:699px;" width="12" height="12" viewBox="0 0 12 12"><rect x="2.5" y="0.5" width="9" height="9" fill="none" stroke="#9a9c9e" stroke-width="1.2"/><path d="M0.6,2.5 V11.4 H9.5" fill="none" stroke="#9a9c9e" stroke-width="1.2"/></svg>
<div class="a ui" style="left:24.5px;top:699.27px;font-size:11.55px;line-height:11.55px;color:#bbbbbb;;transform:scaleX(0.9174);transform-origin:0 50%">Build completed successfully in 3 s 263 ms (5 minutes ago)</div>
<div class="a" style="left:1074px;top:696px;width:123px;height:16px;background:#c2c2c2;"></div>
<div class="a ui" style="left:1077px;top:699.47px;font-size:11.55px;line-height:11.55px;color:#3a3a3a;;transform:scaleX(0.9174);transform-origin:0 50%">Windows Ink Workspace</div>
<div class="a" style="left:1157px;top:698px;width:11px;height:14px;background:rgba(120,220,180,0.55);"></div>
<div class="a ui" style="left:1197.5px;top:699.47px;font-size:11.55px;line-height:11.55px;color:#bbbbbb;;transform:scaleX(0.9174);transform-origin:0 50%">9</div>
<div class="a ui" style="left:1174px;top:699.47px;font-size:11.55px;line-height:11.55px;color:rgba(255,255,255,0.4);;transform:scaleX(0.9174);transform-origin:0 50%">12:5</div>
<div class="a ui" style="left:1213.5px;top:700.48px;font-size:10.14px;line-height:10.14px;color:#bbbbbb;;transform:scaleX(0.9174);transform-origin:0 50%">CRLF</div>
<div class="a ui" style="left:1247px;top:699.85px;font-size:10.79px;line-height:10.79px;color:#bbbbbb;;transform:scaleX(0.9174);transform-origin:0 50%">UTF-8</div>
<div class="a ui" style="left:1286px;top:700.19px;font-size:11.12px;line-height:11.12px;color:#bbbbbb;;transform:scaleX(0.9174);transform-origin:0 50%">4 spaces</div>
<svg class="a" style="left:1337px;top:698px;" width="12" height="12" viewBox="0 0 12 12"><path d="M1,5 H8 V11 H1Z" fill="#afb1b3"/><path d="M5,5 V2.5 A2.5,2.5 0 0 1 10,2.5 V4" fill="none" stroke="#afb1b3" stroke-width="1.3"/></svg>
<svg class="a" style="left:1359px;top:697px;" width="12" height="13" viewBox="0 0 12 13"><g fill="#afb1b3"><rect x="2" y="0" width="8" height="4"/><rect x="0" y="4" width="12" height="1.5"/><circle cx="6" cy="8" r="3"/><rect x="1" y="11" width="10" height="2"/></g></svg>
<div class="a" style="left:208px;top:42px;width:292px;height:464px;background:rgba(0,0,0,0.35);filter:blur(1.5px)"></div>
<div class="a" style="left:210px;top:44px;width:288px;height:460px;background:#dedede;border:1.5px solid #f6f6f6"></div>
<div class="a ui" style="left:220.5px;top:53.70px;font-size:10.6px;line-height:10.6px;color:#777777;">Calculator</div>
<div class="a" style="left:390px;top:58px;width:9px;height:1px;background:#6f6f6f;"></div>
<div class="a" style="left:431px;top:54px;width:9px;height:9px;background:transparent;border:1px solid #6f6f6f"></div>
<svg class="a" style="left:472px;top:54px" width="10" height="10" viewBox="0 0 10 10"><g stroke="#6f6f6f" stroke-width="1"><line x1="0.5" y1="0.5" x2="9.5" y2="9.5"/><line x1="9.5" y1="0.5" x2="0.5" y2="9.5"/></g></svg>
<div class="a" style="left:220.5px;top:86.5px;width:15px;height:1.4px;background:#1a1a1a;"></div>
<div class="a" style="left:220.5px;top:91px;width:15px;height:1.4px;background:#1a1a1a;"></div>
<div class="a" style="left:220.5px;top:95.5px;width:15px;height:1.4px;background:#1a1a1a;"></div>
<div class="a ui" style="left:252.5px;top:82.00px;font-size:18.0px;line-height:18.0px;color:#111111;-webkit-text-stroke:0.45px #111">Scientific</div>
<svg class="a" style="left:471px;top:83px" width="17" height="17" viewBox="0 0 17 17"><path d="M3.2,5.2 A6.8,6.8 0 1 1 2,9.5" fill="none" stroke="#1a1a1a" stroke-width="1.4"/><polyline points="1.6,2.8 2.9,5.7 5.9,4.8" fill="none" stroke="#1a1a1a" stroke-width="1.4"/><polyline points="8.5,4.5 8.5,9 11,11.5" fill="none" stroke="#1a1a1a" stroke-width="1.4"/></svg>
<div class="a ui" style="left:300px;top:113px;width:182px;text-align:right;font-size:12.1px;line-height:16px;color:#5f5f5f">3 × 4 ÷ 3 × 99 =</div>
<div class="a ui" style="left:380px;top:130px;width:106px;text-align:right;font-size:22.7px;line-height:30px;color:#111111;-webkit-text-stroke:0.55px #111">396</div>
<div class="a ui" style="left:225.5px;top:180.60px;font-size:10.8px;line-height:10.8px;color:#111111;font-weight:bold;transform:scaleX(0.86);transform-origin:0 50%">DEG</div>
<div class="a ui" style="left:275.5px;top:180.60px;font-size:10.8px;line-height:10.8px;color:#111111;font-weight:bold;transform:scaleX(0.82);transform-origin:0 50%">F-E</div>
<div class="a ui" style="left:228.5px;top:211.70px;font-size:10.6px;line-height:10.6px;color:#b8b8b8;font-weight:bold">MC</div>
<div class="a ui" style="left:274.7px;top:211.70px;font-size:10.6px;line-height:10.6px;color:#b8b8b8;font-weight:bold">MR</div>
<div class="a ui" style="left:320.3px;top:211.70px;font-size:10.6px;line-height:10.6px;color:#111;font-weight:bold">M+</div>
<div class="a ui" style="left:370.7px;top:211.70px;font-size:10.6px;line-height:10.6px;color:#111;font-weight:bold">M-</div>
<div class="a ui" style="left:416.3px;top:211.70px;font-size:10.6px;line-height:10.6px;color:#111;font-weight:bold">MS</div>
<div class="a ui" style="left:464px;top:211.70px;font-size:10.6px;line-height:10.6px;color:#b8b8b8;font-weight:bold">M<span style='font-size:8px;position:relative;top:-3px'>ˇ</span></div>
<div class="a" style="left:211px;top:233px;width:286px;height:34px;background:#e6e6e6;"></div>
<svg class="a" style="left:222px;top:244px" width="14" height="14" viewBox="0 0 14 14"><path d="M0.75,13.25 L12.75,0.75 V13.25Z" fill="none" stroke="#1a1a1a" stroke-width="1.4"/><rect x="8" y="9" width="2.5" height="2.5" fill="none" stroke="#1a1a1a" stroke-width="1"/></svg>
<div class="a ui" style="left:243px;top:245.15px;font-size:10.9px;line-height:10.9px;color:#111111;">Trigonometry</div>
<svg class="a" style="left:314px;top:248px" width="8" height="5" viewBox="0 0 8 5"><polyline points="0.5,0.5 4,4 7.5,0.5" fill="none" stroke="#333" stroke-width="1"/></svg>
<div class="a" style="left:342.5px;top:241.5px;font-family:'Liberation Serif',serif;font-style:italic;font-size:16px;line-height:18px;color:#111;transform:scaleX(1.25)">f</div>
<div class="a ui" style="left:361px;top:245.35px;font-size:10.5px;line-height:10.5px;color:#111111;">Function</div>
<svg class="a" style="left:409px;top:248px" width="8" height="5" viewBox="0 0 8 5"><polyline points="0.5,0.5 4,4 7.5,0.5" fill="none" stroke="#333" stroke-width="1"/></svg>
<div class="a" style="left:211px;top:266px;width:286px;height:236px;background:#dddddd;"></div>
<div class="cb" style="left:213.5px;top:267.5px;width:55px;height:32px;background:#ebebeb;"><span>2<sup style='font-size:8px;vertical-align:6px'>nd</sup></span></div>
<div class="cb" style="left:270px;top:267.5px;width:55px;height:32px;background:#ebebeb;"><span>π</span></div>
<div class="cb" style="left:326.5px;top:267.5px;width:55px;height:32px;background:#ebebeb;"><span>e</span></div>
<div class="cb" style="left:383px;top:267.5px;width:55px;height:32px;background:#ebebeb;"><span>CE</span></div>
<div class="cb" style="left:439.5px;top:267.5px;width:55px;height:32px;background:#ebebeb;"><svg width="16" height="11" viewBox="0 0 16 11"><path d="M5,0.75 H15.25 V10.25 H5 L0.9,5.5Z" fill="none" stroke="#1a1a1a" stroke-width="1.2"/><g stroke="#1a1a1a" stroke-width="1.2"><line x1="7.5" y1="3" x2="12" y2="8"/><line x1="12" y1="3" x2="7.5" y2="8"/></g></svg></div>
<div class="cb" style="left:213.5px;top:301px;width:55px;height:32px;background:#ebebeb;"><span><span style='font-family:Liberation Serif;font-style:italic;font-size:17px'>x</span><sup style='font-family:Liberation Serif;font-size:11px;vertical-align:7px'>2</sup></span></div>
<div class="cb" style="left:270px;top:301px;width:55px;height:32px;background:#ebebeb;"><span><span style='font-size:13px'>¹⁄</span><span style='font-family:Liberation Serif;font-style:italic;font-size:17px'>x</span></span></div>
<div class="cb" style="left:326.5px;top:301px;width:55px;height:32px;background:#ebebeb;"><span>|<span style='font-family:Liberation Serif;font-style:italic;font-size:16px'>x</span>|</span></div>
<div class="cb" style="left:383px;top:301px;width:55px;height:32px;background:#ebebeb;"><span>exp</span></div>
<div class="cb" style="left:439.5px;top:301px;width:55px;height:32px;background:#ebebeb;"><span>mod</span></div>
<div class="cb" style="left:213.5px;top:334.5px;width:55px;height:32px;background:#ebebeb;"><span><sup style='font-size:9px;vertical-align:6px'>2</sup><span style='font-size:15px'>√</span><span style='font-family:Liberation Serif;font-style:italic;font-size:16px;text-decoration:overline'>x</span></span></div>
<div class="cb" style="left:270px;top:334.5px;width:55px;height:32px;background:#ebebeb;"><span>(</span></div>
<div class="cb" style="left:326.5px;top:334.5px;width:55px;height:32px;background:#ebebeb;"><span>)</span></div>
<div class="cb" style="left:383px;top:334.5px;width:55px;height:32px;background:#ebebeb;"><span><span style='font-family:Liberation Serif;font-style:italic;font-size:16px'>n!</span></span></div>
<div class="a" style="left:439.5px;top:334.5px;width:55px;height:32px;background:#ebebeb"></div>
<svg class="a" style="left:460.5px;top:345.5px" width="13" height="12" viewBox="0 0 13 12"><circle cx="6.5" cy="1.3" r="1.1" fill="#1a1a1a"/><rect x="0" y="4.6" width="13" height="1.1" fill="#1a1a1a"/><circle cx="6.5" cy="9" r="1.1" fill="#1a1a1a"/></svg>
<div class="cb" style="left:213.5px;top:368px;width:55px;height:32px;background:#ebebeb;"><span><span style='font-family:Liberation Serif;font-style:italic;font-size:17px'>x</span><sup style='font-family:Liberation Serif;font-style:italic;font-size:11px;vertical-align:7px'>y</sup></span></div>
<div class="cb" style="left:270px;top:368px;width:55px;height:32px;background:#f6f6f6;font-size:15.8px;-webkit-text-stroke:0.3px #000;padding-top:4px;"><span>7</span></div>
<div class="cb" style="left:326.5px;top:368px;width:55px;height:32px;background:#f6f6f6;font-size:15.8px;-webkit-text-stroke:0.3px #000;padding-top:4px;"><span>8</span></div>
<div class="cb" style="left:383px;top:368px;width:55px;height:32px;background:#f6f6f6;font-size:15.8px;-webkit-text-stroke:0.3px #000;padding-top:4px;"><span>9</span></div>
<div class="a" style="left:439.5px;top:368px;width:55px;height:32px;background:#ebebeb"></div>
<svg class="a" style="left:460.5px;top:378px" width="13" height="12" viewBox="0 0 13 12"><g stroke="#1a1a1a" stroke-width="1.1"><line x1="1" y1="0.5" x2="12" y2="11.5"/><line x1="12" y1="0.5" x2="1" y2="11.5"/></g></svg>
<div class="cb" style="left:213.5px;top:401.5px;width:55px;height:32px;background:#ebebeb;"><span>10<sup style='font-family:Liberation Serif;font-style:italic;font-size:8px;vertical-align:6px'>x</sup></span></div>
<div class="cb" style="left:270px;top:401.5px;width:55px;height:32px;background:#f6f6f6;font-size:15.8px;-webkit-text-stroke:0.3px #000;padding-top:4px;"><span>4</span></div>
<div class="cb" style="left:326.5px;top:401.5px;width:55px;height:32px;background:#f6f6f6;font-size:15.8px;-webkit-text-stroke:0.3px #000;padding-top:4px;"><span>5</span></div>
<div class="cb" style="left:383px;top:401.5px;width:55px;height:32px;background:#f6f6f6;font-size:15.8px;-webkit-text-stroke:0.3px #000;padding-top:4px;"><span>6</span></div>
<div class="a" style="left:439.5px;top:401.5px;width:55px;height:32px;background:#ebebeb"></div>
<svg class="a" style="left:460.5px;top:411px" width="13" height="12" viewBox="0 0 13 12"><rect x="0" y="5.5" width="13" height="1.1" fill="#1a1a1a"/></svg>
<div class="cb" style="left:213.5px;top:435px;width:55px;height:32px;background:#ebebeb;"><span>log</span></div>
<div class="cb" style="left:270px;top:435px;width:55px;height:32px;background:#f6f6f6;font-size:15.8px;-webkit-text-stroke:0.3px #000;padding-top:4px;"><span>1</span></div>
<div class="cb" style="left:326.5px;top:435px;width:55px;height:32px;background:#f6f6f6;font-size:15.8px;-webkit-text-stroke:0.3px #000;padding-top:4px;"><span>2</span></div>
<div class="cb" style="left:383px;top:435px;width:55px;height:32px;background:#f6f6f6;font-size:15.8px;-webkit-text-stroke:0.3px #000;padding-top:4px;"><span>3</span></div>
<div class="a" style="left:439.5px;top:435px;width:55px;height:32px;background:#ebebeb"></div>
<svg class="a" style="left:460.5px;top:444.5px" width="13" height="12" viewBox="0 0 13 12"><rect x="0" y="5.5" width="13" height="1.1" fill="#1a1a1a"/><rect x="5.95" y="0" width="1.1" height="12" fill="#1a1a1a"/></svg>
<div class="cb" style="left:213.5px;top:468.5px;width:55px;height:32px;background:#ebebeb;"><span>ln</span></div>
<div class="cb" style="left:270px;top:468.5px;width:55px;height:32px;background:#f6f6f6;"><span><sup style='font-size:10px;vertical-align:4px'>+</sup><span style='font-size:14px'>/</span><sub style='font-size:10px;vertical-align:-1px'>–</sub></span></div>
<div class="cb" style="left:326.5px;top:468.5px;width:55px;height:32px;background:#f6f6f6;font-size:15.8px;-webkit-text-stroke:0.3px #000;padding-top:4px;"><span>0</span></div>
<div class="cb" style="left:383px;top:468.5px;width:55px;height:32px;background:#f6f6f6;font-size:16px;font-weight:bold;padding-top:6px">.</div>
<div class="a" style="left:439.5px;top:468.5px;width:55px;height:32px;background:#d5d5d5"></div>
<svg class="a" style="left:460.5px;top:478px" width="13" height="12" viewBox="0 0 13 12"><rect x="0" y="2.5" width="13" height="1.1" fill="#1a1a1a"/><rect x="0" y="8.6" width="13" height="1.1" fill="#1a1a1a"/></svg>
</body></html>
